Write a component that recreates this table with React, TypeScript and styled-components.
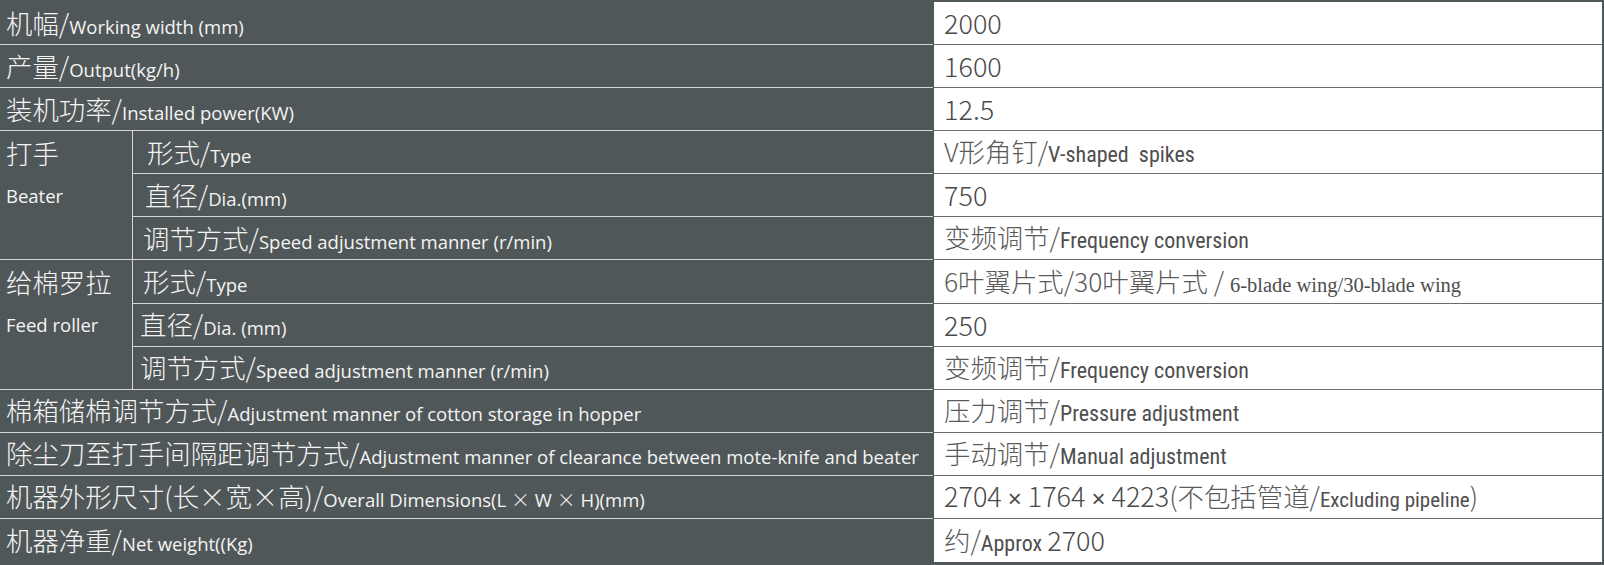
import React from 'react';
import styled, { createGlobalStyle } from 'styled-components';

const GlobalStyle = createGlobalStyle`
  html, body {
    margin: 0;
    padding: 0;
    background: #505758;
  }
  #root {
    width: 1604px;
    height: 565px;
    overflow: hidden;
  }
`;

const DARK = '#505758';
const LIGHT_LINE = '#d6d6d6';
const VALUE_LINE = '#6e6e6e';
const CJK = `"Noto Sans CJK SC Light", "Noto Sans CJK SC DemiLight", "Noto Sans CJK SC", "Noto Sans", sans-serif`;

const Table = styled.div`
  display: grid;
  grid-template-columns: 133px 800px 1fr;
  grid-template-rows: repeat(13, 1fr);
  box-sizing: border-box;
  height: 565px;
  padding: 2px 2px 3px 0;
  background: ${DARK};
`;

const Cell = styled.div<{ $last?: boolean }>`
  display: flex;
  align-items: center;
  box-sizing: border-box;
  min-width: 0;
  white-space: nowrap;
  border-bottom: ${p => (p.$last ? 'none' : `1px solid ${LIGHT_LINE}`)};
`;

const Label = styled(Cell)`
  grid-column: 1 / 3;
  padding-left: 6px;
  color: #f4f4f4;
`;

const GroupLabel = styled.div<{ $rows: number }>`
  grid-column: 1 / 2;
  grid-row: span ${p => p.$rows};
  display: flex;
  flex-direction: column;
  box-sizing: border-box;
  padding-left: 6px;
  color: #f4f4f4;
  border-bottom: 1px solid ${LIGHT_LINE};
  border-right: 1px solid ${LIGHT_LINE};
`;

const GroupLine = styled.div<{ $rows: number }>`
  display: flex;
  align-items: center;
  height: calc(100% / ${p => p.$rows});
  white-space: nowrap;
`;

const SubLabel = styled(Cell)<{ $indent?: number }>`
  grid-column: 2 / 3;
  padding-left: ${p => 10 + (p.$indent ?? 0)}px;
  color: #f4f4f4;
`;

const Value = styled(Cell)`
  grid-column: 3 / 4;
  margin-left: 1px;
  padding-left: 10px;
  background: #ffffff;
  color: #4e4e4e;
  border-bottom: ${p => (p.$last ? 'none' : `1px solid ${VALUE_LINE}`)};
`;

const Line = styled.span`
  line-height: 1;
`;

const Zh = styled.span`
  font-family: ${CJK};
  font-weight: 300;
  font-size: 26.4px;
`;

const En = styled.span`
  font-family: "Open Sans", "Lato", sans-serif;
  font-size: 18.5px;
`;

const Times = styled.span`
  font-family: ${CJK};
  font-weight: 300;
  font-size: 19px;
`;

const Num = styled.span`
  font-family: ${CJK};
  font-weight: 300;
  font-size: 27px;
  color: #4a4a4a;
`;

const Cross = styled.span`
  font-family: "Liberation Sans", sans-serif;
  font-size: 24px;
`;

const ValZh = styled.span`
  font-family: ${CJK};
  font-weight: 300;
  font-size: 26.4px;
  color: #5a5a5a;
`;

const ValEn = styled.span<{ $size?: number }>`
  font-family: "Liberation Sans Narrow", "Roboto Condensed", "Liberation Sans", sans-serif;
  font-size: ${p => p.$size ?? 22}px;
  color: #4e4e4e;
`;

const ValSerif = styled.span`
  font-family: "Liberation Serif", serif;
  font-size: 20.5px;
  color: #4e4e4e;
`;

type Row = {
  zh: string;
  en: React.ReactNode;
  value: React.ReactNode;
  indent?: number;
};

type Group = {
  zh: string;
  en: string;
  rows: Row[];
};

const Frequency = (
  <>
    <ValZh>变频调节/</ValZh>
    <ValEn>Frequency conversion</ValEn>
  </>
);

const items: Array<Row | Group> = [
  { zh: '机幅/', en: 'Working width (mm)', value: <Num>2000</Num> },
  { zh: '产量/', en: 'Output(kg/h)', value: <Num>1600</Num> },
  { zh: '装机功率/', en: 'Installed power(KW)', value: <Num>12.5</Num> },
  {
    zh: '打手',
    en: 'Beater',
    rows: [
      {
        zh: '形式/',
        en: 'Type',
        indent: 4,
        value: (
          <>
            <ValZh>V形角钉/</ValZh>
            <ValEn>V-shaped&nbsp; spikes</ValEn>
          </>
        ),
      },
      { zh: '直径/', en: 'Dia.(mm)', indent: 2, value: <Num>750</Num> },
      { zh: '调节方式/', en: 'Speed adjustment manner (r/min)', value: Frequency },
    ],
  },
  {
    zh: '给棉罗拉',
    en: 'Feed roller',
    rows: [
      {
        zh: '形式/',
        en: 'Type',
        value: (
          <>
            <ValZh>6叶翼片式/30叶翼片式 / </ValZh>
            <ValSerif>6-blade wing/30-blade wing</ValSerif>
          </>
        ),
      },
      { zh: '直径/', en: 'Dia. (mm)', indent: -3, value: <Num>250</Num> },
      { zh: '调节方式/', en: 'Speed adjustment manner (r/min)', indent: -3, value: Frequency },
    ],
  },
  {
    zh: '棉箱储棉调节方式/',
    en: 'Adjustment manner of cotton storage in hopper',
    value: (
      <>
        <ValZh>压力调节/</ValZh>
        <ValEn>Pressure adjustment</ValEn>
      </>
    ),
  },
  {
    zh: '除尘刀至打手间隔距调节方式/',
    en: 'Adjustment manner of clearance between mote-knife and beater',
    value: (
      <>
        <ValZh>手动调节/</ValZh>
        <ValEn>Manual adjustment</ValEn>
      </>
    ),
  },
  {
    zh: '机器外形尺寸(长×宽×高)/',
    en: (
      <>
        Overall Dimensions(L <Times>×</Times> W <Times>×</Times> H)(mm)
      </>
    ),
    value: (
      <>
        <Num>
          2704 <Cross>×</Cross> 1764 <Cross>×</Cross> 4223
        </Num>
        <ValZh>(不包括管道/</ValZh>
        <ValEn $size={21}>Excluding pipeline</ValEn>
        <ValZh>)</ValZh>
      </>
    ),
  },
  {
    zh: '机器净重/',
    en: 'Net weight((Kg)',
    value: (
      <>
        <ValZh>约/</ValZh>
        <ValEn>Approx </ValEn>
        <Num>2700</Num>
      </>
    ),
  },
];

const isGroup = (item: Row | Group): item is Group => (item as Group).rows !== undefined;

export default function App() {
  const cells: React.ReactNode[] = [];
  items.forEach((item, i) => {
    const last = i === items.length - 1;
    if (isGroup(item)) {
      cells.push(
        <GroupLabel key={`g${i}`} $rows={item.rows.length}>
          <GroupLine $rows={item.rows.length}>
            <Zh>{item.zh}</Zh>
          </GroupLine>
          <GroupLine $rows={item.rows.length}>
            <En>{item.en}</En>
          </GroupLine>
        </GroupLabel>
      );
      item.rows.forEach((row, j) => {
        cells.push(
          <SubLabel key={`s${i}-${j}`} $indent={row.indent}>
            <Line>
              <Zh>{row.zh}</Zh>
              <En>{row.en}</En>
            </Line>
          </SubLabel>,
          <Value key={`v${i}-${j}`}>
            <Line>{row.value}</Line>
          </Value>
        );
      });
    } else {
      cells.push(
        <Label key={`l${i}`} $last={last}>
          <Line>
            <Zh>{item.zh}</Zh>
            <En>{item.en}</En>
          </Line>
        </Label>,
        <Value key={`v${i}`} $last={last}>
          <Line>{item.value}</Line>
        </Value>
      );
    }
  });

  return (
    <>
      <GlobalStyle />
      <Table>{cells}</Table>
    </>
  );
}
